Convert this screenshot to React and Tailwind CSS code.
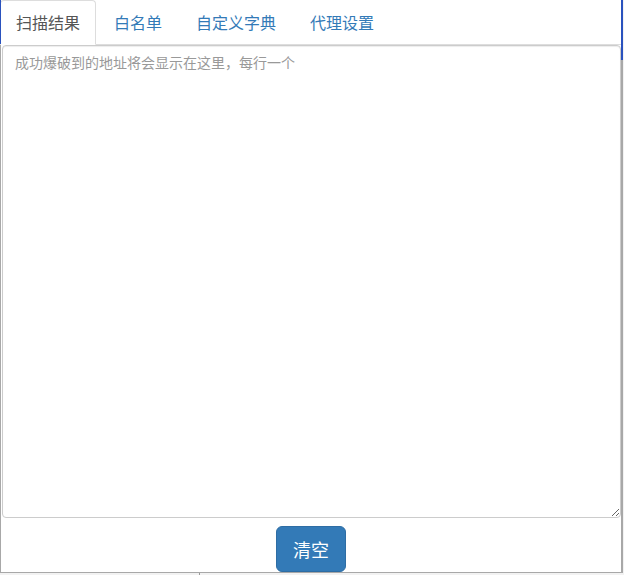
import React from "react";

export default function App() {
  const tabs = ["扫描结果", "白名单", "自定义字典", "代理设置"];
  return (
    <div className="relative w-[624px] h-[575px] bg-[#f2f2f2] font-['Noto_Sans_CJK_SC','Liberation_Sans',sans-serif]">
      <div className="flex flex-col w-[623px] h-[573px] bg-white border-l border-r-2 border-b border-[#a8a8a8]">
        <ul className="flex h-[45px] border-b border-[#dddddd]">
          {tabs.map((t, i) => (
            <li
              key={t}
              className={
                i === 0
                  ? "mr-[2px] -ml-px h-[45px] px-[15px] pt-[10px] text-[16px] leading-[22px] text-[#555555] bg-white border border-[#dddddd] border-b-white rounded-t-[4px]"
                  : "mr-[2px] h-[44px] px-[16px] pt-[11px] text-[16px] leading-[22px] text-[#337ab7]"
              }
            >
              {t}
            </li>
          ))}
        </ul>
        <textarea
          className="mx-px mt-0 h-[473px] w-[619px] resize-y border border-[#cccccc] rounded-[4px] px-[12px] py-[6px] text-[14px] leading-[20px] text-[#555] placeholder:text-[#999999] shadow-[inset_0_1px_1px_rgba(0,0,0,0.075)] outline-none"
          placeholder="成功爆破到的地址将会显示在这里，每行一个"
        />
        <div className="flex justify-center pt-[8px]">
          <button className="h-[46px] w-[70px] rounded-[6px] bg-[#337ab7] border border-[#2e6da4] text-white text-[18px] leading-[24px]">
            清空
          </button>
        </div>
      </div>
      <div className="absolute left-0 top-0 w-px h-[44px] bg-[#2a52be]" />
      <div className="absolute left-[621px] top-0 w-[2px] h-[60px] bg-[#2a52be]" />
      <div className="absolute left-[199px] top-[573px] w-px h-[2px] bg-[#999]" />
    </div>
  );
}
